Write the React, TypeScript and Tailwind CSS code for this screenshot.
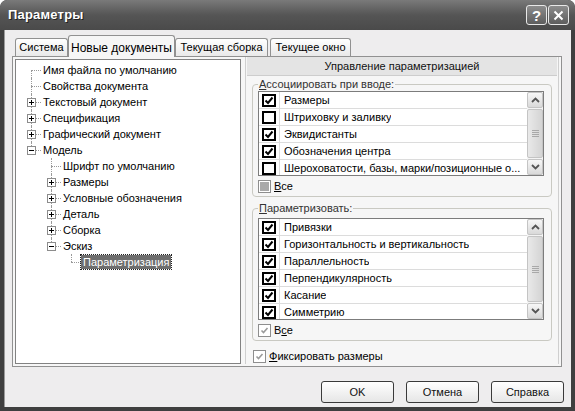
import React from 'react';

type TreeRow = {
  t: string;
  l: number;
  box?: '+' | '-';
  first?: boolean;
  last?: boolean;
  selected?: boolean;
};

const treeRows: TreeRow[] = [
  { t: 'Имя файла по умолчанию', l: 0, first: true },
  { t: 'Свойства документа', l: 0 },
  { t: 'Текстовый документ', l: 0, box: '+' },
  { t: 'Спецификация', l: 0, box: '+' },
  { t: 'Графический документ', l: 0, box: '+' },
  { t: 'Модель', l: 0, box: '-', last: true },
  { t: 'Шрифт по умолчанию', l: 1, first: true },
  { t: 'Размеры', l: 1, box: '+' },
  { t: 'Условные обозначения', l: 1, box: '+' },
  { t: 'Деталь', l: 1, box: '+' },
  { t: 'Сборка', l: 1, box: '+' },
  { t: 'Эскиз', l: 1, box: '-', last: true },
  { t: 'Параметризация', l: 2, first: true, last: true, selected: true },
];

const assocItems = [
  { t: 'Размеры', c: true },
  { t: 'Штриховку и заливку', c: false },
  { t: 'Эквидистанты', c: true },
  { t: 'Обозначения центра', c: true },
  { t: 'Шероховатости, базы, марки/позиционные о...', c: false },
];

const paramItems = [
  'Привязки',
  'Горизонтальность и вертикальность',
  'Параллельность',
  'Перпендикулярность',
  'Касание',
  'Симметрию',
];

const Tree = () => (
  <div className="w-[226px] h-[305px] mt-[2px] ml-[2px] bg-white border border-[#828282] pt-[2px] overflow-hidden">
    {treeRows.map((r, i) => {
      const cx = 15 + r.l * 20;
      return (
        <div key={i} className="relative h-[16px] flex items-center" style={{ paddingLeft: cx + 11 }}>
          {/* vertical connector */}
          <span
            className="absolute border-l border-dotted border-[#9a9a9a]"
            style={{ left: cx, top: r.first && r.l === 0 ? 8 : 0, height: r.last ? 8 : 16 }}
          />
          {/* horizontal connector */}
          <span className="absolute top-[8px] border-t border-dotted border-[#9a9a9a]" style={{ left: cx, width: 10 }} />
          {r.box && (
            <span
              className="absolute top-[4px] w-[9px] h-[9px] bg-white border border-[#8c8c8c] flex items-center justify-center"
              style={{ left: cx - 4 }}
            >
              <span className="absolute w-[5px] h-px bg-black" />
              {r.box === '+' && <span className="absolute w-px h-[5px] bg-black" />}
            </span>
          )}
          <span
            className={
              r.selected
                ? 'bg-[#6e6e6e] text-white px-[2px] leading-[14px] outline outline-1 outline-dotted outline-[#222] ml-[-1px]'
                : 'px-[1px] leading-[14px] text-black'
            }
          >
            {r.t}
          </span>
        </div>
      );
    })}
  </div>
);

const BigCheck = ({ checked }: { checked: boolean }) => (
  <span className="w-[14px] h-[13px] border-2 border-black bg-white flex items-center justify-center">
    {checked && (
      <svg width="10" height="9" viewBox="0 0 10 9">
        <path d="M1.5 4.5 L4 7 L8.5 1.5" fill="none" stroke="#000" strokeWidth="2" />
      </svg>
    )}
  </span>
);

const SmallCheck = ({ state }: { state: 'checked' | 'mixed' }) => (
  <span className="w-[13px] h-[13px] border border-[#8e8e8e] bg-white flex items-center justify-center shrink-0">
    {state === 'mixed' ? (
      <span className="w-[9px] h-[9px] bg-[#a9a9a9]" />
    ) : (
      <svg width="9" height="9" viewBox="0 0 9 9">
        <path d="M1.5 4.5 L3.5 6.5 L7.5 2" fill="none" stroke="#9a9a9a" strokeWidth="1.6" />
      </svg>
    )}
  </span>
);

const Chevron = ({ up }: { up: boolean }) => (
  <svg width="9" height="6" viewBox="0 0 9 6">
    <path d={up ? 'M1 5 L4.5 1.5 L8 5' : 'M1 1 L4.5 4.5 L8 1'} fill="none" stroke="#555" strokeWidth="1.8" />
  </svg>
);

const ScrollBar = () => (
  <div className="w-[16px] h-full bg-[#f4f4f4] flex flex-col gap-[1px]">
    <div className="h-[16px] rounded-[2px] border border-[#c4c4c4] bg-gradient-to-b from-[#f7f7f7] to-[#d9d9d9] flex items-center justify-center">
      <Chevron up />
    </div>
    <div className="flex-1 rounded-[2px] border border-[#c4c4c4] bg-gradient-to-r from-[#e9e9e9] to-[#d4d4d4] flex flex-col items-center justify-center gap-[1px]">
      <span className="w-[7px] h-px bg-[#a8a8a8]" />
      <span className="w-[7px] h-px bg-[#a8a8a8]" />
      <span className="w-[7px] h-px bg-[#a8a8a8]" />
      <span className="w-[7px] h-px bg-[#a8a8a8]" />
    </div>
    <div className="h-[16px] rounded-[2px] border border-[#c4c4c4] bg-gradient-to-b from-[#f7f7f7] to-[#d9d9d9] flex items-center justify-center">
      <Chevron up={false} />
    </div>
  </div>
);

const CheckList = ({ items, height }: { items: { t: string; c: boolean }[]; height: number }) => (
  <div className="w-[286px] border border-[#7c7c7c] bg-white flex overflow-hidden" style={{ height }}>
    <div className="flex-1 overflow-hidden">
      {items.map((it, i) => (
        <div key={i} className="h-[17px] flex border-b border-[#dcdcdc]">
          <div className="w-[21px] border-r border-[#dcdcdc] flex items-center pl-[3px]">
            <BigCheck checked={it.c} />
          </div>
          <div className="pl-[4px] flex items-center whitespace-nowrap overflow-hidden text-[11px] leading-[15px] text-black">{it.t}</div>
        </div>
      ))}
    </div>
    <ScrollBar />
  </div>
);

const Group = ({ label, u, children, listMt }: { label: string; u: number; children: React.ReactNode; listMt: number }) => (
  <fieldset className="border border-[#c9c9c2] rounded-[4px] px-[5px] pb-[3px]">
    <legend className="px-[1px] leading-[13px] text-[#333]">
      <span className="underline">{label.slice(0, u)}</span>
      {label.slice(u)}
    </legend>
    <div style={{ marginTop: listMt }}>{children}</div>
  </fieldset>
);

const Button = ({ children }: { children: React.ReactNode }) => (
  <button className="w-[73px] h-[22px] rounded-[3px] border border-[#3a3a3a] bg-gradient-to-b from-white to-[#e6e6e6] text-[#111] font-normal text-[11px] flex items-center justify-center">
    {children}
  </button>
);

export default function App() {
  return (
    <div
      className="w-[575px] h-[411px] bg-[#3f3f3f] rounded-t-[7px] flex flex-col overflow-hidden text-[11px] text-black"
      style={{ fontFamily: '"Liberation Sans", Arial, sans-serif' }}
    >
      {/* title bar */}
      <div className="h-[30px] shrink-0 bg-gradient-to-b from-[#7a7a7a] via-[#555] to-[#4a4a4a] rounded-t-[7px] flex items-center pl-[8px] pr-[6px]">
        <span className="text-white font-bold text-[13px] tracking-[0.2px] [text-shadow:1px_1px_0_#222]">Параметры</span>
        <div className="ml-auto flex gap-[1px]">
          <div className="w-[21px] h-[20px] rounded-[3px] border border-[#e8e8e8] bg-gradient-to-b from-[#8c8c8c] to-[#5e5e5e] flex items-center justify-center text-white font-bold text-[15px] leading-none">
            ?
          </div>
          <div className="w-[21px] h-[20px] rounded-[3px] border border-[#e8e8e8] bg-gradient-to-b from-[#8c8c8c] to-[#5e5e5e] flex items-center justify-center">
            <svg width="11" height="11" viewBox="0 0 11 11">
              <path d="M1.5 1.5 L9.5 9.5 M9.5 1.5 L1.5 9.5" stroke="#fff" strokeWidth="2" />
            </svg>
          </div>
        </div>
      </div>

      {/* client */}
      <div className="flex-1 mx-[4px] mb-[4px] bg-[#eeedee] border-l border-[#9a9a9a] flex flex-col">
        {/* tabs */}
        <div className="flex items-end h-[22px] mt-[4px] pl-[10px]">
          <div className="w-[53px] h-[18px] border border-b-0 border-[#919191] rounded-t-[3px] bg-gradient-to-b from-white to-[#e9e9e9] flex items-center justify-center">
            Система
          </div>
          <div className="w-[107px] h-[22px] border border-b-0 border-[#919191] rounded-t-[3px] bg-[#f6f6f6] flex items-start justify-center pt-[3px] relative z-10 mb-[-1px]">
            <span className="text-[12px]">Новые документы</span>
          </div>
          <div className="w-[93px] h-[18px] border border-b-0 border-[#919191] rounded-t-[3px] bg-gradient-to-b from-white to-[#e9e9e9] flex items-center justify-center">
            Текущая сборка
          </div>
          <div className="w-[81px] h-[18px] ml-[2px] border border-b-0 border-[#919191] rounded-t-[3px] bg-gradient-to-b from-white to-[#e9e9e9] flex items-center justify-center">
            Текущее окно
          </div>
        </div>

        {/* pane */}
        <div className="ml-[7px] w-[550px] h-[311px] border border-[#919191] bg-[#f6f6f6] flex items-start">
          <Tree />
          <div className="ml-[4px] w-[314px] h-[307px] border-l border-r border-[#cfcfcf] flex flex-col">
            <div className="mx-[1px] h-[19px] bg-[#e4e4e4] border-b border-[#cdcdcd] flex items-center justify-center text-[#111]">
              Управление параметризацией
            </div>
            <div className="px-[6px] flex flex-col">
              <div className="mt-[2px]">
                <Group label="Ассоциировать при вводе:" u={1} listMt={0}>
                  <CheckList items={assocItems} height={85} />
                  <div className="flex items-center gap-[3px] mt-[4px] h-[13px]">
                    <SmallCheck state="mixed" />
                    <span>
                      <span className="underline">В</span>се
                    </span>
                  </div>
                </Group>
              </div>
              <div className="mt-[5px]">
                <Group label="Параметризовать:" u={1} listMt={3}>
                  <CheckList items={paramItems.map(t => ({ t, c: true }))} height={102} />
                  <div className="flex items-center gap-[3px] mt-[4px] h-[13px]">
                    <SmallCheck state="checked" />
                    <span>
                      В<span className="underline">с</span>е
                    </span>
                  </div>
                </Group>
              </div>
              <div className="flex items-center gap-[3px] mt-[9px] ml-[1px] h-[13px]">
                <SmallCheck state="checked" />
                <span>
                  <span className="underline">Ф</span>иксировать размеры
                </span>
              </div>
            </div>
          </div>
        </div>

        {/* buttons */}
        <div className="flex justify-end gap-[12px] mt-[14px] pr-[7px]">
          <Button>OK</Button>
          <Button>Отмена</Button>
          <Button>Справка</Button>
        </div>
      </div>
    </div>
  );
}
